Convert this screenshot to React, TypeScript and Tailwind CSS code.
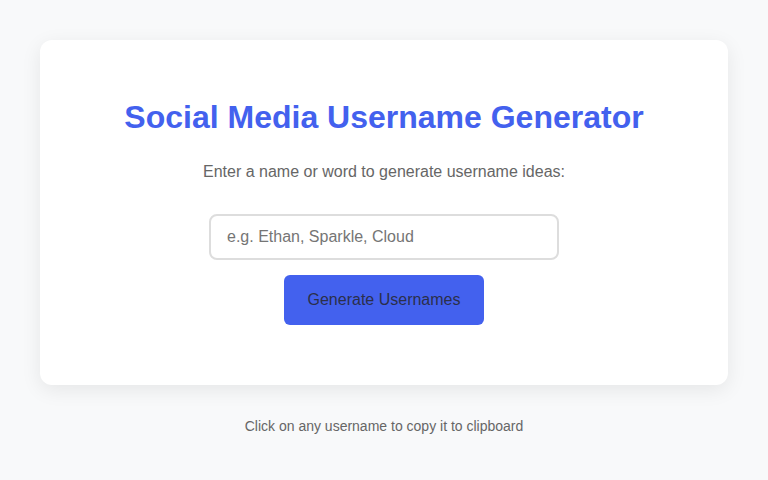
export default function App() {
  return (
    <div className="min-h-[480px] bg-[#f8f9fa] px-[40px] pt-[40px] flex flex-col items-center" style={{ fontFamily: '"Liberation Sans", Arial, sans-serif' }}>
      <div className="w-[688px] bg-white rounded-[12px] shadow-[0_5px_20px_rgba(0,0,0,0.08)] flex flex-col items-center pt-[59px] pb-[60px]">
        <h1 className="text-[32px] leading-[37px] font-bold text-[#4361ee]">Social Media Username Generator</h1>
        <p className="mt-[27px] text-[16px] leading-[18px] text-[#666666]">Enter a name or word to generate username ideas:</p>
        <input
          type="text"
          placeholder="e.g. Ethan, Sparkle, Cloud"
          className="mt-[33px] w-[350px] h-[46px] border-2 border-[#dddddd] rounded-[8px] px-[16px] text-[16px] text-[#333] placeholder:text-[#757575] outline-none bg-white"
        />
        <button className="mt-[15px] w-[200px] h-[50px] rounded-[6px] bg-[#4361ee] text-[16px] text-[#2b2f4a]">Generate Usernames</button>
      </div>
      <p className="mt-[33px] text-[14px] leading-[16px] text-[#666666]">Click on any username to copy it to clipboard</p>
    </div>
  );
}
